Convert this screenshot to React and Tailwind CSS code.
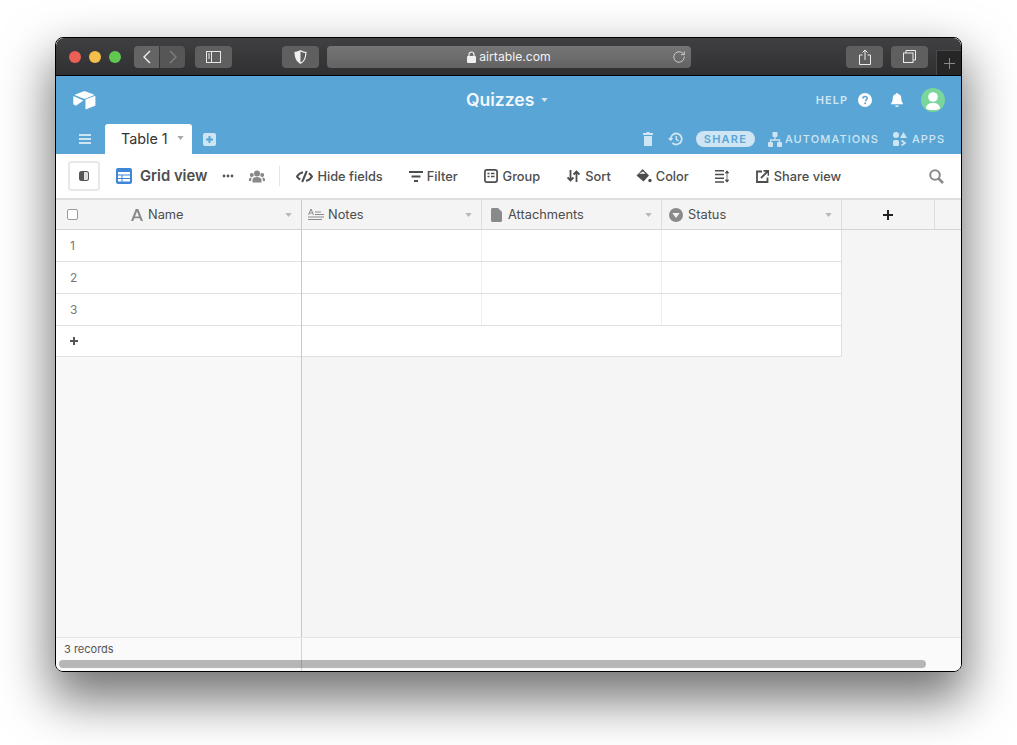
import { RotateCw } from 'lucide-react';

const font = { fontFamily: 'Inter, "Liberation Sans", sans-serif' };

function Caret({ className = 'text-[#b0b0b0]' }) {
    return (
        <svg className={className} width="7" height="4" viewBox="0 0 8 5"><path d="M0 0h8L4 5z" fill="currentColor" /></svg>
    );
}

function ToolButton({ icon, label, gap = 'ml-[4px]', className = '' }) {
    return (
        <div className={`flex items-center ${className}`}>
            {icon}
            {label && <span className={`${gap} mt-px text-[12.800px] font-medium text-[#4d4d4d] whitespace-nowrap`}>{label}</span>}
        </div>
    );
}

function TitleBar() {
    return (
        <div className="flex items-center h-[38px] border-b border-black bg-gradient-to-b from-[#403f41] to-[#302f31] shrink-0 rounded-t-[8px] relative">
            <div className="ml-[13px] w-[12px] h-[12px] rounded-full bg-[#ec5f57]" />
            <div className="ml-[8px] w-[12px] h-[12px] rounded-full bg-[#f3bf4a]" />
            <div className="ml-[8px] w-[12px] h-[12px] rounded-full bg-[#60c850]" />

            <div className="ml-[13px] w-[25px] h-[22px] rounded-l-[4px] bg-[#646465] flex items-center justify-center">
                <svg width="10" height="14" viewBox="0 0 10 14" fill="none"><path d="M8 1L2 7l6 6" stroke="#f0f0f0" strokeWidth="1.4" /></svg>
            </div>
            <div className="ml-[1px] w-[25px] h-[22px] rounded-r-[4px] bg-[#565657] flex items-center justify-center">
                <svg width="10" height="14" viewBox="0 0 10 14" fill="none"><path d="M2 1l6 6-6 6" stroke="#808081" strokeWidth="1.4" /></svg>
            </div>
            <div className="ml-[10px] w-[37px] h-[22px] rounded-[4px] bg-[#5f5f60] flex items-center justify-center">
                <svg width="15" height="12" viewBox="0 0 15 12" fill="none"><rect x=".5" y=".5" width="14" height="11" stroke="#e8e8e8" /><path d="M5.500 .5v11" stroke="#e8e8e8" /><path d="M2 3h2M2 5h2M2 7h2" stroke="#e8e8e8" /></svg>
            </div>
            <div className="ml-[50px] w-[37px] h-[22px] rounded-[4px] bg-[#5f5f60] flex items-center justify-center">
                <svg width="13" height="14" viewBox="0 0 13 14"><path d="M6.500 0C8 1 10.500 1.800 12.500 1.800 12.500 8 10.500 12 6.500 14 2.500 12 .5 8 .5 1.800 2.500 1.800 5 1 6.500 0z" fill="#f0f0f0" /><path d="M6.500 1.500C8 2.300 9.800 2.800 11.300 2.900 11.200 7.800 9.700 10.900 6.500 12.600z" fill="#5f5f60" /></svg>
            </div>
            <div className="ml-[8px] w-[364px] h-[22px] rounded-[4px] bg-gradient-to-b from-[#757576] to-[#636364] flex items-center justify-center relative">
                <svg className="mr-[3px]" width="9" height="12" viewBox="0 0 9 12" fill="none"><path d="M2 5.500V3.500a2.500 2.500 0 0 1 5 0v2" stroke="#f0f0f0" strokeWidth="1.200" /><rect y="5" width="9" height="7" rx="1" fill="#f0f0f0" /></svg>
                <span className="text-[12.200px] text-[#f2f2f2] leading-none mt-[2px]">airtable.com</span>
                <RotateCw className="absolute right-[5px] top-[4px] text-[#e6e6e6]" size={14} strokeWidth={1.3} />
            </div>
            <div className="ml-[155px] w-[37px] h-[22px] rounded-[4px] bg-[#5f5f60] flex items-center justify-center">
                <svg width="12" height="16" viewBox="0 0 12 16" fill="none"><path d="M3.500 6H.5v9.500h11V6H8.500M6 11V1M3.500 3.500L6 1l2.500 2.500" stroke="#ececec" /></svg>
            </div>
            <div className="ml-[8px] w-[37px] h-[22px] rounded-[4px] bg-[#5f5f60] flex items-center justify-center">
                <svg width="13" height="13" viewBox="0 0 13 13" fill="none"><rect x=".5" y="3" width="9.500" height="9.500" stroke="#ececec" /><path d="M3 3V.5h9.500V10H10" stroke="#ececec" /></svg>
            </div>
            <div className="absolute right-0 bottom-0 w-[25px] h-[25px] bg-[#262627] border-l border-t border-[#4a4a4b] flex items-center justify-center">
                <svg width="11" height="11" viewBox="0 0 11 11"><path d="M5.500 0v11M0 5.500h11" stroke="#8a8a8b" /></svg>
            </div>
        </div>
    );
}

function BlueHeader() {
    return (
        <div className="bg-[#59a6d6] shrink-0 h-[78px] flex flex-col">
            <div className="h-[48px] flex items-center relative">
                <svg className="ml-[17px]" width="23" height="19" viewBox="0 0 24 20">
                    <path d="M10.600 .4L2.200 3.700c-.4.200-.4.700 0 .900l8.500 3.300c.9.300 1.800.3 2.600 0l8.500-3.300c.4-.2.400-.7 0-.9L13.400.4c-.9-.3-1.900-.3-2.800 0z" fill="#fff" />
                    <path d="M13 9.800v8.800c0 .4.400.6.700.5l9.400-3.600c.2-.1.400-.3.400-.5V5.700c0-.4-.4-.6-.7-.5l-9.400 3.600c-.2.200-.4.400-.4 1z" fill="#fff" />
                    <path d="M10.800 10.100L.9 5.500C.6 5.300.2 5.500.2 6v7.500c0 .3.100.5.300.6l2.500 1.400" fill="#fff" />
                </svg>
                <div className="absolute left-[410px] top-[13px] flex items-center">
                    <span className="text-[17.500px] leading-[22px] font-semibold text-[#f2f8fc]">Quizzes</span>
                    <Caret className="ml-[7px] text-[#d3e7f4]" />
                </div>
                <div className="ml-auto flex items-center">
                    <span className="text-[11px] font-semibold tracking-[1px] text-[#cfe5f3]">HELP</span>
                    <svg className="ml-[10px]" width="14" height="14" viewBox="0 0 14 14"><circle cx="7" cy="7" r="7" fill="#fff" /><path d="M4.900 5.400c0-1.200 1-2 2.200-2s2.100.8 2.100 1.900c0 1.500-1.700 1.500-1.700 2.900" fill="none" stroke="#59a6d6" strokeWidth="1.500" /><circle cx="7.200" cy="10.300" r="1" fill="#59a6d6" /></svg>
                    <svg className="ml-[19px]" width="12" height="14" viewBox="0 0 12 14"><path d="M6 0c.6 0 1 .4 1 1 2.300.5 3.300 2.200 3.300 4.500 0 2.400.6 3.500 1.700 5v.8H0v-.8c1.100-1.500 1.700-2.600 1.700-5C1.700 3.200 2.700 1.500 5 1c0-.6.400-1 1-1z" fill="#fff" /><path d="M4 12.400h4c0 .9-1 1.400-2 1.400s-2-.5-2-1.400z" fill="#fff" /></svg>
                    <div className="ml-[18px] mr-[16px] w-[24px] h-[24px] rounded-full bg-[#7bd69c] overflow-hidden flex items-center justify-center">
                        <svg width="24" height="24" viewBox="0 0 24 24"><circle cx="12" cy="9" r="4.800" fill="#fff" /><path d="M5 20.500c0-3.500 2.800-5.500 7-5.500s7 2 7 5.500c-1.500 1-4 1.500-7 1.500s-5.500-.5-7-1.500z" fill="#fff" /></svg>
                    </div>
                </div>
            </div>
            <div className="h-[30px] flex items-stretch">
                <div className="w-[49px] flex items-center justify-center pl-[9px]">
                    <svg width="12" height="10" viewBox="0 0 12 10"><path d="M0 0h12v2H0zM0 4h12v2H0zM0 8h12v2H0z" fill="#cfe5f3" /></svg>
                </div>
                <div className="w-[87px] bg-white rounded-t-[3px] flex items-center pl-[16px]">
                    <span className="text-[14.300px] text-[#333] font-normal leading-none">Table 1</span>
                    <Caret className="ml-[9px] mb-[2px] text-[#a8a8a8]" />
                </div>
                <div className="flex items-center ml-[11px]">
                    <svg width="13" height="13" viewBox="0 0 13 13"><rect width="13" height="13" rx="2" fill="#cfe5f3" /><path d="M6.500 3v7M3 6.500h7" stroke="#59a6d6" strokeWidth="2" /></svg>
                </div>
                <div className="ml-auto flex items-center mr-[16px]">
                    <svg width="10" height="14" viewBox="0 0 10 14"><path d="M3.500 0h3l.5 1h3v2H0V1h3zM1 4h8v9c0 .6-.4 1-1 1H2c-.6 0-1-.4-1-1z" fill="#cfe5f3" /></svg>
                    <svg className="ml-[15px]" width="15" height="14" viewBox="0 0 15 14" fill="none"><path d="M2.700 7a5.500 5.500 0 1 1 1.700 4" stroke="#cfe5f3" strokeWidth="1.800" /><path d="M0 6h5.400L2.700 9.200z" fill="#cfe5f3" /><path d="M8.300 4v3.400l2.300 1.400" stroke="#cfe5f3" strokeWidth="1.500" /></svg>
                    <div className="ml-[13px] w-[59px] h-[16px] rounded-full bg-[#cfe5f3] flex items-center justify-center">
                        <span className="text-[11px] font-semibold tracking-[1.200px] text-[#59a6d6] leading-none">SHARE</span>
                    </div>
                    <svg className="ml-[13px]" width="14" height="15" viewBox="0 0 14 15"><rect x="4.500" y="0" width="5" height="5" rx="1" fill="#cfe5f3" /><rect x="0" y="10" width="5" height="5" rx="1" fill="#cfe5f3" /><rect x="9" y="10" width="5" height="5" rx="1" fill="#cfe5f3" /><path d="M7 5v3M2.500 10.500V8h9v2.500" fill="none" stroke="#cfe5f3" strokeWidth="1.300" /></svg>
                    <span className="ml-[3px] text-[11px] font-medium tracking-[1.100px] text-[#cfe5f3] leading-none">AUTOMATIONS</span>
                    <svg className="ml-[14px]" width="14" height="14" viewBox="0 0 14 14"><circle cx="3" cy="3" r="3" fill="#cfe5f3" /><path d="M10.500 0L14 6H7z" fill="#cfe5f3" /><rect y="8" width="6" height="6" rx="1.500" fill="#cfe5f3" /><path d="M8.500 8.500L12 11l-3.500 2.500" fill="none" stroke="#cfe5f3" strokeWidth="1.700" /></svg>
                    <span className="ml-[5px] text-[11px] font-medium tracking-[1px] text-[#cfe5f3] leading-none">APPS</span>
                </div>
            </div>
        </div>
    );
}

function Toolbar() {
    return (
        <div className="h-[46px] bg-white border-b-2 border-[#dedede] flex items-center shrink-0 text-[#4d4d4d]">
            <div className="ml-[12px] w-[32px] h-[30px] border-2 border-[#e8e8e8] rounded-[3px] flex items-center justify-center">
                <svg width="10" height="10" viewBox="0 0 10 10"><rect width="10" height="10" rx="2.500" fill="#555" /><path d="M5 1h2.500C8.300 1 9 1.700 9 2.500v5C9 8.300 8.300 9 7.500 9H5z" fill="#ddd" /></svg>
            </div>
            <svg className="ml-[16px]" width="16" height="16" viewBox="0 0 16 16"><rect width="16" height="16" rx="2" fill="#3f86d8" /><path d="M2 4h12v2.500H2zM2 7.500h3.500V10H2zM6.500 7.500H14V10H6.500zM2 11h3.500v2.500H2zM6.500 11H14v2.500H6.500z" fill="#fff" /></svg>
            <span className="ml-[8px] mt-px text-[14.800px] font-semibold text-[#4d4d4d] whitespace-nowrap">Grid view</span>
            <svg className="ml-[15px]" width="12" height="4" viewBox="0 0 12 4"><circle cx="2" cy="2" r="1.400" fill="#555" /><circle cx="6" cy="2" r="1.400" fill="#555" /><circle cx="10" cy="2" r="1.400" fill="#555" /></svg>
            <svg className="ml-[15px]" width="16" height="13" viewBox="0 0 16 13"><circle cx="8" cy="3.500" r="3" fill="#888" /><circle cx="2.800" cy="5" r="2" fill="#888" /><circle cx="13.200" cy="5" r="2" fill="#888" /><path d="M3.500 12.500V10c0-2 2-3 4.500-3s4.500 1 4.500 3v2.500zM0 11V9.500C0 8.300 1 7.500 2.500 7.500l.5.100C2.400 8.300 2.200 9 2.200 10v1zM16 11V9.500c0-1.200-1-2-2.500-2l-.5.100c.6.700.8 1.400.8 2.400v1z" fill="#888" /></svg>
            <div className="ml-[14px] w-px h-[20px] bg-[#e6e6e6]" />
            <ToolButton
                className="ml-[16px]"
                label="Hide fields"
                icon={<svg width="17" height="13" viewBox="0 0 17 13" fill="none"><path d="M7 2.200C4 2.800 2 4.800 1 6.500c.7 1.200 1.800 2.300 3.200 3.100M10 10.800c3-.6 5-2.600 6-4.300-.7-1.200-1.800-2.300-3.200-3.100" stroke="#4d4d4d" strokeWidth="2" /><path d="M10.800 1L6.200 12" stroke="#4d4d4d" strokeWidth="2" /></svg>}
            />
            <ToolButton
                className="ml-[26px]"
                label="Filter"
                icon={<svg width="14" height="11" viewBox="0 0 14 11"><path d="M0 0h14v2H0zM2.500 4.500h9v2h-9zM5 9h4v2H5z" fill="#4d4d4d" /></svg>}
            />
            <ToolButton
                className="ml-[26px]"
                gap="ml-[5px]"
                label="Group"
                icon={<svg width="14" height="14" viewBox="0 0 14 14" fill="none"><rect x=".9" y=".9" width="12.200" height="12.200" rx="2" stroke="#4d4d4d" strokeWidth="1.700" /><path d="M3.500 4.500h2M7 4.500h3.500M3.500 7.500h2M7 7.500h3.500" stroke="#4d4d4d" strokeWidth="1.500" /></svg>}
            />
            <ToolButton
                className="ml-[27px]"
                gap="ml-[5px]"
                label="Sort"
                icon={<svg width="13" height="12" viewBox="0 0 13 12" fill="none"><path d="M3.500 0v10M.5 7.500l3 3 3-3" stroke="#4d4d4d" strokeWidth="1.800" /><path d="M9.500 12V2M6.500 4.500l3-3 3 3" stroke="#4d4d4d" strokeWidth="1.800" /></svg>}
            />
            <ToolButton
                className="ml-[25px]"
                label="Color"
                icon={<svg width="16" height="14" viewBox="0 0 16 14"><path d="M6.500 0L13 6.500 7.500 12.500 0.500 6.500 4 3z" fill="#4d4d4d" /><circle cx="14" cy="11.500" r="1.700" fill="#4d4d4d" /><path d="M3 4.800h6.500L7 2.500z" fill="#fff" /></svg>}
            />
            <svg className="ml-[26px]" width="14" height="13" viewBox="0 0 14 13"><path d="M0 0h9v1.500H0zM0 3.700h9v1.500H0zM0 7.500h9V9H0zM0 11.300h9v1.500H0z" fill="#4d4d4d" /><path d="M12 1v11M10.300 3L12 .8 13.700 3zM10.300 10L12 12.200 13.700 10z" fill="#4d4d4d" stroke="#4d4d4d" strokeWidth=".8" /></svg>
            <ToolButton
                className="ml-[27px]"
                gap="ml-[5px]"
                label="Share view"
                icon={<svg width="13" height="13" viewBox="0 0 13 13" fill="none"><path d="M6 1.500H1V12h10.500V7.500" stroke="#4d4d4d" strokeWidth="1.800" /><path d="M5 8l7-7M7.500 .8h5v5" stroke="#4d4d4d" strokeWidth="1.800" /></svg>}
            />
            <svg className="ml-auto mr-[17px]" width="15" height="15" viewBox="0 0 15 15" fill="none"><circle cx="6" cy="6" r="4.800" stroke="#8a8a8a" strokeWidth="2" /><path d="M9.500 9.500L14 14" stroke="#8a8a8a" strokeWidth="2.500" /></svg>
        </div>
    );
}

const fieldIcons = {
    notes: <svg width="16" height="13" viewBox="0 0 16 13" fill="none"><path d="M.5 7L3 1l2.500 6M1.500 5h3" stroke="#8a8a8a" /><path d="M7 3.500h6v1H7zM7 6h9v1H7zM0 8.500h16v1H0zM0 11h14v1H0z" fill="#8a8a8a" /></svg>,
    file: <svg width="11" height="14" viewBox="0 0 11 14"><path d="M1.500 0H7l4 4v8.500c0 .8-.7 1.500-1.500 1.500h-8C.7 14 0 13.300 0 12.500v-11C0 .7.700 0 1.500 0z" fill="#8a8a8a" /></svg>,
    status: <svg width="14" height="14" viewBox="0 0 14 14"><circle cx="7" cy="7" r="7" fill="#8a8a8a" /><path d="M3.300 5h7.400L7 10z" fill="#f3f3f3" /></svg>,
};

function HeaderCell({ icon, label, gap }) {
    return (
        <div className="w-[180px] h-full border-r border-[#dedede] flex items-center pl-[6px] pr-[9px] shrink-0">
            <div className="w-[16px] flex items-center justify-center">{icon}</div>
            <span className={`${gap} text-[12.800px] text-[#4d4d4d]`}>{label}</span>
            <Caret className="ml-auto text-[#b8b8b8]" />
        </div>
    );
}

function Grid() {
    const rows = [1, 2, 3];
    return (
        <div className="flex-1 flex min-h-0">
            {/* pane with the frozen column */}
            <div className="w-[246px] shrink-0 border-r border-[#c9c9c9] bg-[#f8f8f8] flex flex-col">
                <div className="h-[30px] bg-[#f4f4f4] border-b border-[#d4d4d4] flex items-center relative shrink-0">
                    <div className="ml-[11px] w-[11px] h-[11px] border border-[#9a9a9a] rounded-[2px] bg-white" />
                    <svg className="ml-[53px]" width="12" height="12" viewBox="0 0 12 12"><path d="M4.700 0h2.600L12 12H9.700l-1-2.700H3.300l-1 2.700H0zM6 2.500L4 7.500h4z" fill="#8a8a8a" /></svg>
                    <span className="ml-[5px] text-[12.800px] text-[#4d4d4d]">Name</span>
                    <Caret className="ml-auto mr-[9px] text-[#b8b8b8]" />
                </div>
                {rows.map((r) => (
                    <div key={r} className="h-[32px] bg-white border-b border-[#e0e0e0] flex items-center shrink-0">
                        <span className="ml-[14px] text-[12px] text-[#777]">{r}</span>
                    </div>
                ))}
                <div className="h-[31px] bg-white border-b border-[#e0e0e0] flex items-center shrink-0">
                    <svg className="ml-[14px]" width="8" height="8" viewBox="0 0 8 8"><path d="M4 0v8M0 4h8" stroke="#555" strokeWidth="2" /></svg>
                </div>
            </div>
            {/* scrolling columns */}
            <div className="flex-1 bg-[#f5f5f5] flex flex-col min-w-0">
                <div className="h-[30px] bg-[#f4f4f4] border-b border-[#d4d4d4] flex shrink-0">
                    <HeaderCell icon={fieldIcons.notes} label="Notes" gap="ml-[4px]" />
                    <HeaderCell icon={fieldIcons.file} label="Attachments" gap="ml-[4px]" />
                    <HeaderCell icon={fieldIcons.status} label="Status" gap="ml-[4px]" />
                    <div className="w-[93px] border-r border-[#dedede] flex items-center justify-center shrink-0">
                        <svg width="10" height="10" viewBox="0 0 10 10"><path d="M5 0v10M0 5h10" stroke="#222" strokeWidth="2" /></svg>
                    </div>
                </div>
                {rows.map((r) => (
                    <div key={r} className="h-[32px] w-[540px] flex bg-white border-b border-r border-[#e0e0e0] shrink-0">
                        <div className="w-[180px] border-r border-[#efefef]" />
                        <div className="w-[180px] border-r border-[#efefef]" />
                    </div>
                ))}
                <div className="h-[31px] w-[540px] bg-white border-b border-r border-[#e0e0e0] shrink-0" />
            </div>
        </div>
    );
}

function Footer() {
    return (
        <div className="h-[34px] bg-[#fafafa] border-t border-[#e4e4e4] shrink-0 flex relative rounded-b-[6px]">
            <div className="w-[246px] border-r border-[#d4d4d4] pl-[8px] pt-[4px]">
                <span className="text-[11px] text-[#555] leading-[14px] block">3 records</span>
            </div>
            <div className="absolute left-[3px] top-[22px] w-[867px] h-[8px] rounded-full bg-[rgba(0,0,0,0.27)]" />
        </div>
    );
}

export default function App() {
    return (
        <div className="w-[1017px] h-[745px] bg-white overflow-hidden pt-[37px] pl-[55px]" style={font}>
            <div className="w-[907px] h-[635px] flex flex-col border border-black rounded-[8px] overflow-hidden shadow-[0_24px_50px_4px_rgba(0,0,0,0.55)]">
                <TitleBar />
                <BlueHeader />
                <Toolbar />
                <Grid />
                <Footer />
            </div>
        </div>
    );
}
